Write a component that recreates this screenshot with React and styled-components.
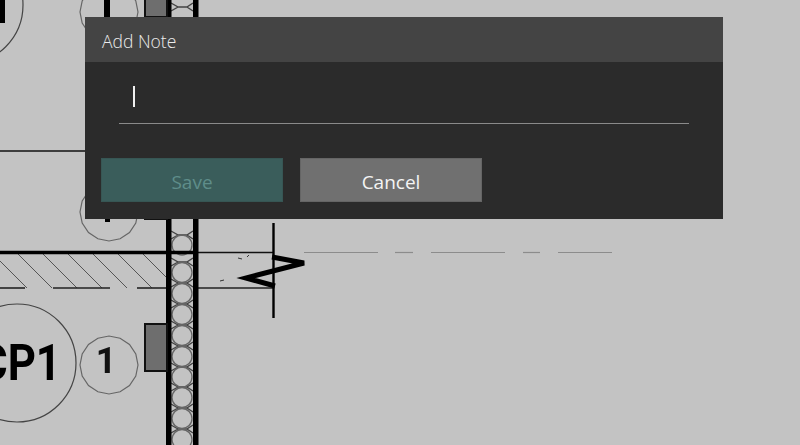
import React from 'react'
import styled, { createGlobalStyle } from 'styled-components'

const GlobalStyle = createGlobalStyle`
  html, body {
    margin: 0;
    padding: 0;
    background: #c3c3c3;
    overflow: hidden;
  }
`

const facet = (cx, cy, r, n = 16) =>
  Array.from({ length: n }, (_, i) => {
    const a = (i / n) * Math.PI * 2
    return `${(cx + r * Math.cos(a)).toFixed(1)},${(cy + r * Math.sin(a)).toFixed(1)}`
  }).join(' ')

const joints = [7, 235, 262, 283, 304, 325, 346, 367, 387, 408, 429]
const cells = [245, 272.5, 293.5, 314.5, 335.5, 356.5, 377, 397.5, 418.5, 439.5]
const hatchStarts = [-7, 18, 43, 68, 93, 118, 143]
const dashes = [[304, 378], [395, 413], [431, 505], [523, 540], [558, 612]]
const sill = [[0, 25], [53, 110], [137, 166], [198, 273]]

function Drawing() {
  return (
    <Plan viewBox="0 0 800 445">
      {/* round tags */}
      <circle cx="-36" cy="5" r="59" fill="none" stroke="#444" strokeWidth="1.2" />
      <circle cx="17" cy="363" r="59" fill="none" stroke="#444" strokeWidth="1.2" />
      <polygon points={facet(109, 12, 29)} fill="none" stroke="#666" strokeWidth="1.2" />
      <polygon points={facet(109, 212, 29)} fill="none" stroke="#666" strokeWidth="1.2" />
      <polygon points={facet(109, 365, 29)} fill="none" stroke="#666" strokeWidth="1.2" />
      <rect x="0" y="0" width="5" height="23" fill="#000" />
      <rect x="104" y="0" width="6" height="17" fill="#000" />
      <rect x="105" y="215" width="5" height="7" fill="#000" />
      <TagBig x="-21" y="380" textLength="82" lengthAdjust="spacingAndGlyphs">CP1</TagBig>
      <TagSmall x="106" y="373" textAnchor="middle">1</TagSmall>

      <line x1="0" y1="151" x2="85" y2="151" stroke="#111" strokeWidth="1.5" />

      {/* insulation */}
      {joints.map((y) => (
        <path
          key={y}
          d={`M171 ${y - 4} L178 ${y} L171 ${y + 4} M193 ${y - 4} L187 ${y} L193 ${y + 4} M178 ${y} H187`}
          stroke="#444"
          strokeWidth="1.4"
          fill="none"
        />
      ))}
      {cells.map((y) => (
        <circle key={y} cx="182" cy={y} r="10" fill="none" stroke="#666" strokeWidth="1.3" />
      ))}

      {/* hatch band */}
      {hatchStarts.map((x) => (
        <line key={x} x1={x} y1="254" x2={Math.min(x + 34, 166)} y2={Math.min(288, 254 + 166 - x)} stroke="#555" strokeWidth="1" />
      ))}
      {sill.map(([a, b]) => (
        <line key={a} x1={a} y1="288" x2={b} y2="288" stroke="#222" strokeWidth="1.6" />
      ))}
      <line x1="0" y1="252.5" x2="198" y2="252.5" stroke="#000" strokeWidth="3.4" />
      <line x1="198" y1="252.5" x2="273" y2="252.5" stroke="#111" strokeWidth="1.6" />

      {/* walls */}
      <rect x="166" y="0" width="5.5" height="445" fill="#000" />
      <rect x="193" y="0" width="5.5" height="445" fill="#000" />

      {/* break line */}
      <line x1="273.5" y1="223" x2="273.5" y2="318" stroke="#000" strokeWidth="2.4" />
      <polyline points="272,257 304,263 246,278 275,286" fill="none" stroke="#000" strokeWidth="5" />
      <path d="M238 258 l4 1 M247 257 l2 -2 M220 281 l4 -1" stroke="#333" strokeWidth="1" />
      {dashes.map(([a, b]) => (
        <line key={a} x1={a} y1="252.5" x2={b} y2="252.5" stroke="#8c8c8c" strokeWidth="1.2" />
      ))}

      {/* plates */}
      <rect x="145" y="170" width="22" height="49" fill="#6e6e6e" stroke="#111" strokeWidth="2" />
      <rect x="145" y="-30" width="22" height="47" fill="#6e6e6e" stroke="#111" strokeWidth="2" />
      <rect x="145" y="324" width="22" height="47" fill="#6e6e6e" stroke="#111" strokeWidth="2" />
    </Plan>
  )
}

export default function App() {
  return (
    <Page>
      <GlobalStyle />
      <Drawing />
      <Dialog>
        <Header>Add Note</Header>
        <Body>
          <Field>
            <Caret />
          </Field>
          <Actions>
            <Button $disabled>Save</Button>
            <Button>Cancel</Button>
          </Actions>
        </Body>
      </Dialog>
    </Page>
  )
}

const Page = styled.div`
  position: relative;
  width: 800px;
  height: 445px;
  padding: 17px 0 0 85px;
  box-sizing: border-box;
  background: #c3c3c3;
  overflow: hidden;
  font-family: "Open Sans", "Noto Sans", sans-serif;
`

const Plan = styled.svg`
  position: absolute;
  top: 0;
  left: 0;
  width: 800px;
  height: 445px;
  filter: blur(0.35px);
`

const TagBig = styled.text`
  font-family: Roboto, "Liberation Sans", sans-serif;
  font-weight: 700;
  font-size: 50px;
  fill: #000;
`

const TagSmall = styled.text`
  font-family: Roboto, "Liberation Sans", sans-serif;
  font-weight: 700;
  font-size: 36px;
  fill: #111;
`

const Dialog = styled.div`
  position: relative;
  width: 638px;
  height: 202px;
  background: #2b2b2b;
  display: flex;
  flex-direction: column;
`

const Header = styled.div`
  height: 45px;
  flex: none;
  background: #444444;
  color: #ececec;
  font-size: 17.5px;
  font-weight: 300;
  line-height: 48px;
  padding-left: 17px;
`

const Body = styled.div`
  flex: 1;
  padding: 0 16px;
  display: flex;
  flex-direction: column;
`

const Field = styled.div`
  margin: 0 18px 0 18px;
  height: 62px;
  flex: none;
  box-sizing: border-box;
  border-bottom: 1px solid #8a8a8a;
  padding: 24px 0 0 14px;
`

const Caret = styled.div`
  width: 2px;
  height: 21px;
  background: #f0f0f0;
`

const Actions = styled.div`
  margin-top: 34px;
  display: flex;
  gap: 17px;
`

const Button = styled.div`
  width: 182px;
  height: 44px;
  box-sizing: border-box;
  padding-top: 4px;
  display: flex;
  align-items: center;
  justify-content: center;
  font-size: 19px;
  background: ${(p) => (p.$disabled ? '#3a5d5b' : '#707070')};
  color: ${(p) => (p.$disabled ? '#5f8d8a' : '#f4f4f4')};
  border: 1px solid ${(p) => (p.$disabled ? '#375654' : '#656565')};
`
